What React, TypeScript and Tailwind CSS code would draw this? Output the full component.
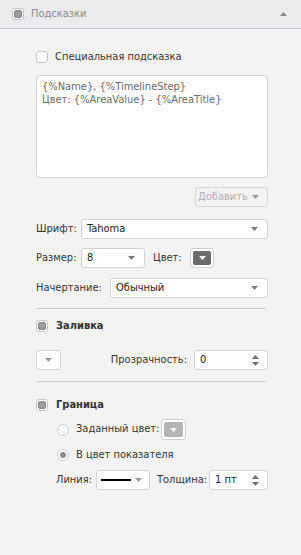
const font = { fontFamily: '"DejaVu Sans Condensed", "DejaVu Sans", sans-serif' }

function Caret({ color = '#7a7a7a' }: { color?: string }) {
  return (
    <svg width="7" height="4" viewBox="0 0 7 4">
      <path d="M0 0h7L3.5 4z" fill={color} />
    </svg>
  )
}

function Spin() {
  return (
    <div className="flex flex-col items-center gap-[3px]">
      <svg width="7" height="4" viewBox="0 0 7 4">
        <path d="M0 4h7L3.5 0z" fill="#6f6f6f" />
      </svg>
      <svg width="7" height="4" viewBox="0 0 7 4">
        <path d="M0 0h7L3.5 4z" fill="#6f6f6f" />
      </svg>
    </div>
  )
}

function Check({ checked = false }: { checked?: boolean }) {
  return (
    <div className="w-[12px] h-[12px] rounded-[3px] border border-[#c4c4c4] bg-white flex items-center justify-center shrink-0">
      {checked && <div className="w-[8px] h-[8px] rounded-[2px] bg-[#9a9a9a] border border-[#8a8a8a]" />}
    </div>
  )
}

function Radio({ checked = false }: { checked?: boolean }) {
  return (
    <div className="w-[12px] h-[12px] rounded-full border border-[#cfcfcf] bg-white flex items-center justify-center shrink-0">
      <div className={checked ? 'w-[6px] h-[6px] rounded-full bg-[#8f8f8f] border border-[#808080]' : 'w-[8px] h-[8px] rounded-full border border-[#ececec]'} />
    </div>
  )
}

function Select({ value, className }: { value: React.ReactNode; className: string }) {
  return (
    <div className={`h-[20px] bg-white border border-[#d2d2d2] rounded-[3px] flex items-center justify-between pl-[5px] pr-[9px] text-[#222] ${className}`}>
      <span>{value}</span>
      <Caret />
    </div>
  )
}

function ColorBtn({ fill, className }: { fill: string; className: string }) {
  return (
    <div className={`rounded-[3px] border border-[#cfcfcf] bg-white p-[2px] shrink-0 ${className}`}>
      <div className="w-full h-full rounded-[2px] flex items-center justify-center" style={{ backgroundColor: fill }}>
        <Caret color="#ffffff" />
      </div>
    </div>
  )
}

export default function App() {
  return (
    <div className="w-[301px] h-[555px] bg-[#f3f3f3] text-[11px] text-[#333]" style={font}>
      <div className="h-[29px] bg-[#ebebed] border-b border-[#c6c7cc] flex items-center pl-[12px] pr-[14px]">
        <div className="w-[12px] h-[12px] rounded-[3px] border border-[#c4c4c4] bg-white flex items-center justify-center">
          <div className="w-[8px] h-[8px] rounded-[2px] bg-[#999] border border-[#888]" />
        </div>
        <span className="ml-[7px] text-[#8a8a8a]">Подсказки</span>
        <div className="ml-auto">
          <svg width="7" height="4" viewBox="0 0 7 4">
            <path d="M0 4h7L3.5 0z" fill="#8a8a8a" />
          </svg>
        </div>
      </div>

      <div className="pl-[36px] pr-[33px]">
        <div className="mt-[22px] h-[12px] flex items-center gap-[7px]">
          <Check />
          <span>Специальная подсказка</span>
        </div>

        <div className="mt-[12px] h-[103px] bg-white border border-[#d2d2d2] rounded-[3px] px-[5px] pt-[4px] text-[#6a6a6a] leading-[13px]">
          <div>{'{%Name}, {%TimelineStep}'}</div>
          <div>{'Цвет: {%AreaValue} - {%AreaTitle}'}</div>
        </div>

        <div className="mt-[9px] flex justify-end">
          <div className="w-[73px] h-[20px] border border-[#d6d6d6] rounded-[3px] flex items-center justify-between pl-[2px] pr-[8px] text-[#b0b0b0]">
            <span>Добавить</span>
            <Caret color="#9a9a9a" />
          </div>
        </div>

        <div className="mt-[12px] flex items-center">
          <span className="w-[45px]">Шрифт:</span>
          <Select value="Tahoma" className="flex-1" />
        </div>

        <div className="mt-[9px] flex items-center">
          <span className="w-[45px]">Размер:</span>
          <Select value="8" className="w-[64px]" />
          <span className="ml-[8px] w-[37px]">Цвет:</span>
          <ColorBtn fill="#6b6b6b" className="w-[24px] h-[20px]" />
        </div>

        <div className="mt-[10px] flex items-center">
          <span className="w-[74px]">Начертание:</span>
          <Select value="Обычный" className="flex-1" />
        </div>

        <div className="mt-[10px] ml-[1px] mr-[2px] border-t border-[#c8c8c8]" />

        <div className="mt-[11px] h-[12px] flex items-center gap-[8px]">
          <Check checked />
          <span className="font-bold">Заливка</span>
        </div>

        <div className="mt-[18px] flex items-center">
          <div className="w-[25px] h-[20px] bg-white border border-[#d2d2d2] rounded-[3px] flex items-center justify-center">
            <Caret color="#9a9a9a" />
          </div>
          <span className="ml-auto mr-[7px]">Прозрачность:</span>
          <div className="w-[74px] h-[20px] bg-white border border-[#d2d2d2] rounded-[3px] flex items-center justify-between pl-[5px] pr-[8px] text-[#222]">
            <span>0</span>
            <Spin />
          </div>
        </div>

        <div className="mt-[11px] ml-[1px] mr-[2px] border-t border-[#c8c8c8]" />

        <div className="mt-[17px] h-[12px] flex items-center gap-[8px]">
          <Check checked />
          <span className="font-bold">Граница</span>
        </div>

        <div className="mt-[8px] ml-[21px] flex items-center">
          <Radio />
          <span className="ml-[7px]">Заданный цвет:</span>
          <ColorBtn fill="#b4b4b4" className="ml-[2px] w-[25px] h-[21px]" />
        </div>

        <div className="mt-[9px] ml-[21px] h-[12px] flex items-center">
          <Radio checked />
          <span className="ml-[7px]">В цвет показателя</span>
        </div>

        <div className="mt-[9px] ml-[20px] flex items-center">
          <span className="w-[40px]">Линия:</span>
          <div className="w-[54px] h-[20px] bg-white border border-[#d2d2d2] rounded-[3px] flex items-center justify-between pl-[4px] pr-[7px] shrink-0">
            <div className="w-[30px] h-[2px] bg-black" />
            <Caret color="#9a9a9a" />
          </div>
          <span className="ml-[7px] w-[52px] shrink-0">Толщина:</span>
          <div className="flex-1 h-[20px] bg-white border border-[#d2d2d2] rounded-[3px] flex items-center justify-between pl-[5px] pr-[8px] text-[#222]">
            <span>1 пт</span>
            <Spin />
          </div>
        </div>
      </div>
    </div>
  )
}
